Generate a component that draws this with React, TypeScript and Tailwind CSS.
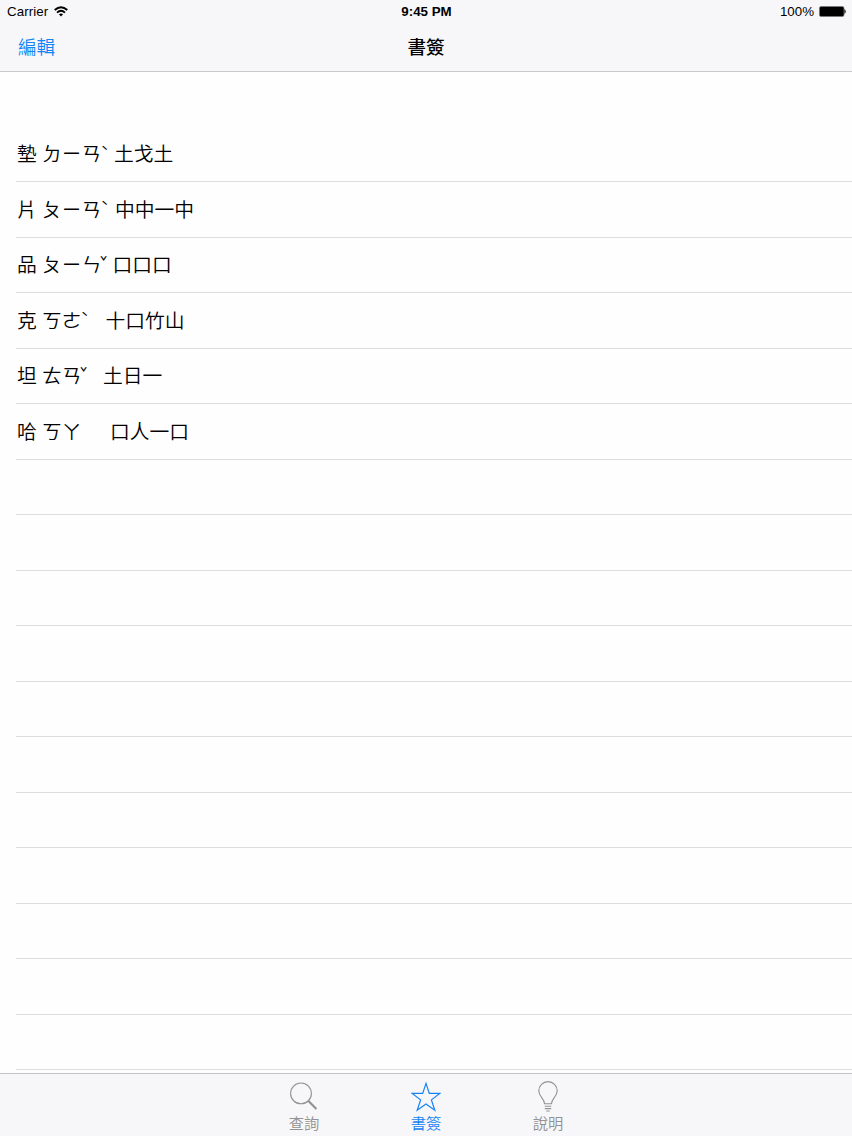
import React, { useState } from 'react';
import clsx from 'clsx';

interface Bookmark {
  char: string;
  sounds: string;
  tone: string;
  keys: string;
  soundsWidth: string;
  toneWidth: string;
}

const bookmarks: Bookmark[] = [
  { char: '墊', sounds: 'ㄉㄧㄢ', tone: 'ˋ', keys: '土戈土', soundsWidth: 'w-[59px]', toneWidth: 'w-[13px]' },
  { char: '片', sounds: 'ㄆㄧㄢ', tone: 'ˋ', keys: '中中一中', soundsWidth: 'w-[59px]', toneWidth: 'w-[14px]' },
  { char: '品', sounds: 'ㄆㄧㄣ', tone: 'ˇ', keys: '口口口', soundsWidth: 'w-[58px]', toneWidth: 'w-[12.5px]' },
  { char: '克', sounds: 'ㄎㄜ', tone: 'ˋ', keys: '十口竹山', soundsWidth: 'w-[39px]', toneWidth: 'w-[24.5px]' },
  { char: '坦', sounds: 'ㄊㄢ', tone: 'ˇ', keys: '土日一', soundsWidth: 'w-[38px]', toneWidth: 'w-[23px]' },
  { char: '哈', sounds: 'ㄎㄚ', tone: '', keys: '口人一口', soundsWidth: 'w-[39px]', toneWidth: 'w-[29px]' },
];

const EMPTY_ROWS = 11;

const SearchIcon = () => (
  <svg width="30" height="32" viewBox="0 0 30 32" fill="none" stroke="currentColor">
    <circle cx="12" cy="13.4" r="10.4" strokeWidth="1.1" />
    <path d="M19.2 20.8 L27.4 29" strokeWidth="2.2" />
  </svg>
);

const StarIcon = () => (
  <svg width="30" height="32" viewBox="0 0 30 32" fill="none" stroke="currentColor" strokeWidth="1.2">
    <path d="M15 3.4 L18.3 13.4 H28.8 L20.4 19.9 L23.8 30.2 L15 24 L6.2 30.2 L9.6 19.9 L1.2 13.4 H11.7 Z" />
  </svg>
);

const BulbIcon = () => (
  <svg width="30" height="32" viewBox="0 0 30 32" fill="none" stroke="currentColor" strokeWidth="1.1">
    <path d="M11.5 23.8 C11.5 18.2 5.8 16.8 5.8 10.8 A9.2 9.2 0 0 1 24.2 10.8 C24.2 16.8 18.5 18.2 18.5 23.8 Z" />
    <path d="M11.8 26.2 H18.2 M11.8 28.6 H18.2 M13.3 31 H16.7" />
  </svg>
);

const tabs = [
  { id: 'search', label: '查詢', icon: SearchIcon },
  { id: 'bookmarks', label: '書簽', icon: StarIcon },
  { id: 'help', label: '說明', icon: BulbIcon },
];

const StatusBar = () => (
  <div className="grid grid-cols-3 items-center h-[23px] pl-[7px] pr-[6px] text-[13.3px] leading-[23px] font-['Liberation_Sans',sans-serif]">
    <div className="flex items-center gap-[6px]">
      <span className="tracking-[0.1px]">Carrier</span>
      <svg width="14" height="11" viewBox="0 0 14 11" fill="none" stroke="#000" strokeWidth="1.9">
        <path d="M0.7 4 Q7 -1.7 13.3 4" />
        <path d="M3 6.6 Q7 3 11 6.6" />
        <path d="M4.9 8.3 Q7 6.6 9.1 8.3 L7 10.5 Z" fill="#000" stroke="none" />
      </svg>
    </div>
    <div className="text-center font-bold text-[13.3px]">9:45 PM</div>
    <div className="flex items-center justify-end gap-[5px]">
      <span>100%</span>
      <svg width="27" height="11" viewBox="0 0 27 11">
        <rect x="0.4" y="0.4" width="24.6" height="10.2" rx="1.8" fill="#000" stroke="#777" strokeWidth="0.8" />
        <path d="M25.7 3.6 Q27.2 5.5 25.7 7.4 Z" fill="#000" stroke="#000" strokeWidth="0.4" />
      </svg>
    </div>
  </div>
);

const App: React.FC = () => {
  const [activeTab, setActiveTab] = useState('bookmarks');

  return (
    <div className="w-full h-screen flex flex-col overflow-hidden bg-[#fefefe] text-black font-['Noto_Sans_CJK_TC',sans-serif]">
      {/* Navigation bar */}
      <header className="h-[72px] shrink-0 bg-[#f7f7f9] border-b border-[#c8c8ca]">
        <StatusBar />
        <div className="grid grid-cols-3 items-center h-[46px] text-[18.6px]">
          <button className="justify-self-start pl-[18px] text-[#1484f5] font-[350]">編輯</button>
          <h1 className="text-center font-medium">書簽</h1>
        </div>
      </header>

      {/* Bookmark list */}
      <main className="flex-1 min-h-0 overflow-hidden pt-[54.5px] pl-4">
        {bookmarks.map((item) => (
          <div
            key={item.char}
            className="flex items-center h-[55.5px] pl-px pb-[1px] border-b border-[#dddde0] text-[19.8px] font-[350] whitespace-nowrap"
          >
            <span className="w-[25px]">{item.char}</span>
            <span className={item.soundsWidth}>{item.sounds}</span>
            <span className={clsx(item.toneWidth, 'text-[12px] font-medium leading-4 pb-[5px]')}>{item.tone}</span>
            <span>{item.keys}</span>
          </div>
        ))}
        {Array.from({ length: EMPTY_ROWS }).map((_, i) => (
          <div key={i} className="h-[55.5px] border-b border-[#dddde0]" />
        ))}
      </main>

      {/* Tab bar */}
      <nav className="flex justify-center h-[63px] shrink-0 bg-[#f7f7f9] border-t border-[#c4c4c6]">
        {tabs.map(({ id, label, icon: Icon }) => (
          <button
            key={id}
            onClick={() => setActiveTab(id)}
            className={clsx(
              'w-[122px] flex flex-col items-center pt-[6px]',
              activeTab === id ? 'text-[#1484f5]' : 'text-[#929292]'
            )}
          >
            <Icon />
            <span className="text-[15.3px] leading-[20px] font-[350]">{label}</span>
          </button>
        ))}
      </nav>
    </div>
  );
};

export default App;
